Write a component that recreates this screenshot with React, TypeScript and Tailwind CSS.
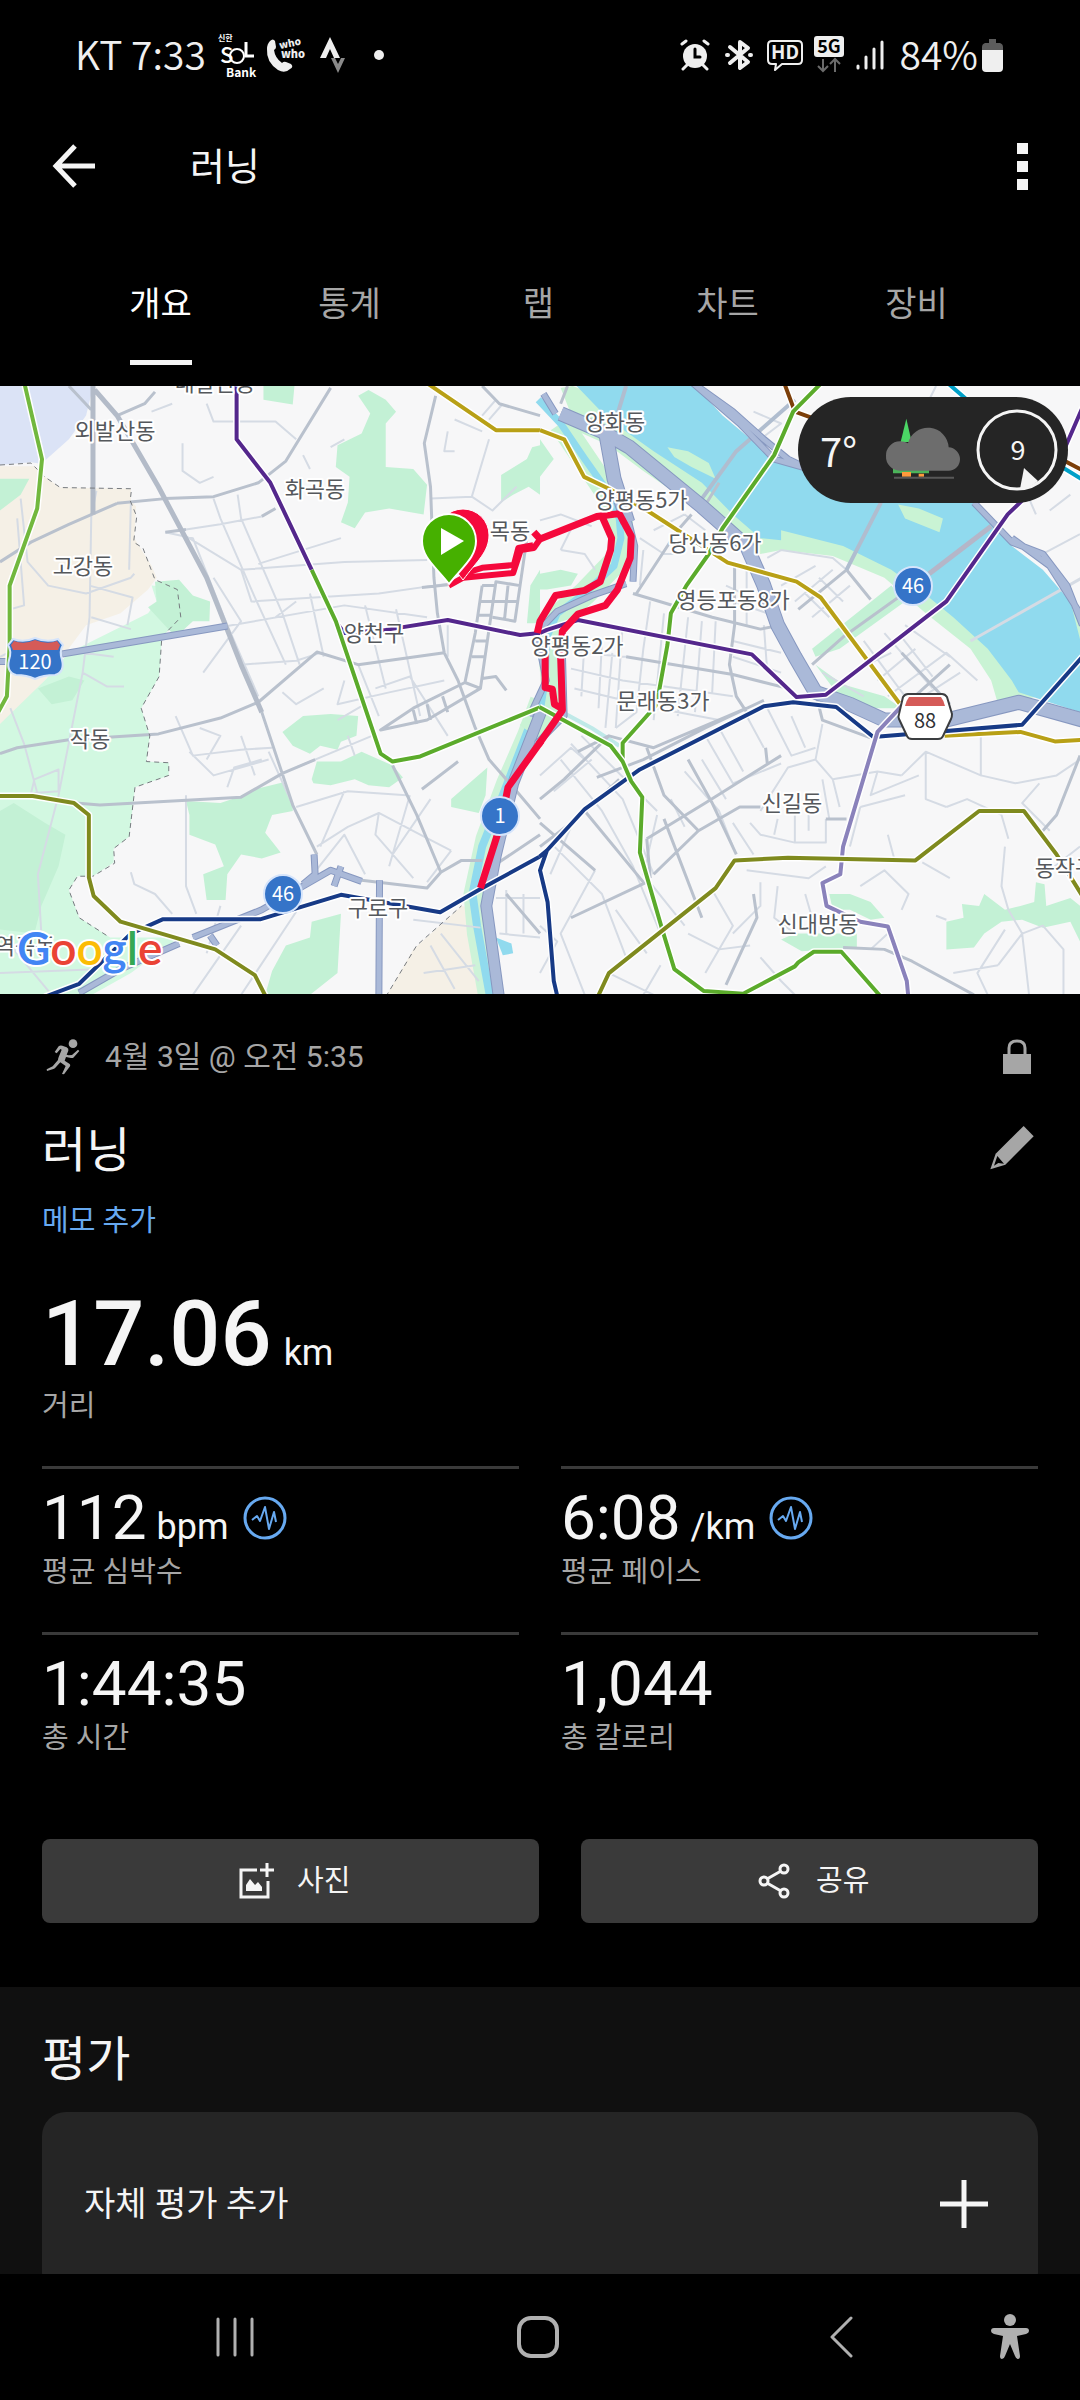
import { ReactNode } from "react";

type TLine = { color: string; d: string };
type TLabel = { text: string; x: number; y: number };
type TStat = { value: string; unit?: string; label: string; zone?: boolean };

const tabs = ["개요", "통계", "랩", "차트", "장비"];

const stats: TStat[] = [
  { value: "112", unit: "bpm", label: "평균 심박수", zone: true },
  { value: "6:08", unit: "/km", label: "평균 페이스", zone: true },
  { value: "1:44:35", label: "총 시간" },
  { value: "1,044", label: "총 칼로리" },
];

/* ---------- map data ---------- */

const westParks =
  "M0 1090L40 1070L130 1120L190 1150L170 1230L120 1330L100 1400L0 1390Z M0 250H85L60 290L0 330Z M450 510L520 505L560 545L610 560L608 610L560 610L510 650L430 575L455 560Z M110 780L200 750L245 760L210 810L150 820Z M765 15H855L850 62L765 50Z M1040 40L1070 25L1120 50L1150 80L1120 110V220L1200 225L1240 265L1230 340L1130 325L1060 335L1030 375L990 360L1010 310L1015 245L975 220L980 165L1050 135L1075 85Z M1568 165V290L1535 270L1490 290L1455 310V240L1530 200L1545 170Z M820 890L880 850L960 845L1040 850L1035 900L990 915L980 935L930 925L900 945L850 925Z M905 1010L920 965L990 965L1050 940L1140 975L1170 1005L1130 1030L1070 1025L1030 1010L960 1025L910 1020Z M540 1065L640 1070L690 1055L740 1035L820 1018L850 1080V1090L790 1100L770 1145L815 1195L760 1210L700 1200L660 1250L655 1315H600L590 1250L650 1230L625 1175L550 1150V1100Z M770 1555L790 1495L830 1430L900 1410L905 1370L990 1350L980 1500L900 1555Z M1310 1060L1415 980L1410 1050L1390 1095L1310 1080Z M1540 520L1568 480V615H1530Z";

const eastParks =
  "M790 680L1020 520L1060 560L870 680L800 700Z M0 490L60 480L110 490L90 520L20 530H0Z M0 150L40 200L0 245Z M800 720L880 770L1000 800L1050 830H960L860 790Z M840 1300L900 1300L960 1320L1000 1360L960 1365L900 1340L850 1340Z M740 1400L920 1400V1435L760 1445L700 1415Z M1180 1440V1370L1230 1360L1225 1325L1275 1330L1290 1300L1350 1340L1395 1330L1435 1320L1440 1270L1465 1275L1470 1330L1540 1310L1568 1330V1420L1540 1370L1460 1385L1400 1365L1340 1370L1290 1400L1260 1435Z";

const westMinor =
  "M540 378L640 365L760 345 M480 385L560 400L660 620L750 800 M530 390L700 480L1000 460L1240 455 M700 480L730 560L1100 540L1300 515 M660 622L1000 570L1240 600 M620 300L640 350L740 550L830 720 M690 290L700 350L820 590L870 720 M750 465L990 400 M670 640L700 720L860 710L930 690 M530 160V230L580 260L620 245 M600 60L620 105H800L860 150 M620 500L700 610L590 740 M1000 760L980 820L1130 790L1290 760 M1040 720L1100 850 M1090 780L1190 750L1300 900 M1150 580L1220 850 M780 940L850 1075 M510 850L560 950L700 935L790 930 M550 940L620 1000L780 960 M580 880L640 900L600 960 M660 1030L680 980L760 960 M700 900L740 1000 M860 980L1080 900 M540 1050V1280L570 1350 M380 1245L390 1275L450 1300L500 1350 M280 280L265 345L260 600L240 740L170 1050 M170 1050L110 1250L120 1400 M60 300L80 460L140 520L250 540L380 500L390 490 M240 740L310 775H360 M30 830L70 920L110 1050 M265 600L380 630 M260 520L385 550L370 620 M240 690L330 700 M380 310L375 480 M100 1010L170 985V1040L90 1045Z M1300 130L1290 180L1320 180 M1250 300L1370 295L1420 150 M1370 295L1430 330L1500 270 M1320 100L1400 130 M1400 90L1440 50 M1420 100L1460 60 M920 1180L1010 1130L1100 1095L1220 1150L1310 1190 M1100 1095L1090 1150L1200 1260 M900 1260L1000 1150L1060 1250 M860 1080L1010 1040L1180 1050 M1000 1040L930 1180 M1190 1050L1130 1230 M1250 1060L1140 1200 M1310 1190L1240 1270 M1200 1365L1395 1385 M1440 1310H1568 M1450 1400L1568 1410 M1470 1290V1400 M1520 1300V1400 M1250 1430L1320 1540 M1230 1500L1380 1480 M1280 1400L1390 1520 M40 1440L150 1555 M0 1500L280 1490 M640 1330L600 1450 M700 1380L620 1480L560 1555 M860 1345L700 1555 M0 700L70 670L130 740 M50 350L70 570L30 580 M800 600L860 560 M900 540L940 700 M1060 570L1120 780 M940 780L860 820L820 790 M980 860L1060 820 M1010 900L1030 950 M1300 620V700 M880 190L900 225 M1000 150L960 170 M440 80L500 60";

const westRoads =
  "M200 15L265 75 M340 90L420 60L450 30 M340 312L480 300L620 295L750 260L830 205L960 20 M0 460L90 410L200 365L340 312 M0 945L50 930L200 910L460 895L640 855L750 815L920 688L1040 720L1290 690 M220 1070L290 1075L700 1055L820 995L915 960 M1400 520L1380 640L1350 765L1200 830L1105 885L1240 860L1395 780L1425 600L1440 510L1510 520L1495 610L1430 600 M1400 520H1440 M1395 560H1500 M1390 595H1430 M1475 520L1465 605 M1380 660H1415 M1370 700H1410 M1350 765L1395 780 M1240 820L1250 860 M1200 835L1210 870 M1285 800L1300 840 M1530 400L1510 520 M1265 40L1232 160L1250 270L1260 500L1270 590L1290 690L1330 760L1380 880L1420 960L1500 1040L1568 1110 M1140 975L1210 1100L1280 1245L1240 1285L1050 1265 M1280 1245L1340 1215H1400 M1400 15L1450 60L1568 90 M480 385L540 378 M760 345L800 325 M1225 1035L1330 965 M1400 755L1440 750L1470 785 M760 840L850 1075L920 1200 M1225 525L1300 518 M1440 1225L1568 1150 M1470 1300L1568 1400";

const eastMinor =
  "M60 430L130 440L160 480 M100 360L60 430 M0 355L60 340L150 370 M290 400L360 440L410 440 M330 380L420 340 M300 430L290 520 M320 560L300 680L280 840L220 880 M360 590L330 860 M430 600L400 850 M470 610L450 840 M510 610L500 790 M90 730L240 760L560 800 M110 690L250 700 M130 650L120 800 M180 660L170 830 M210 690L190 880 M240 620L220 880 M100 780L340 830L520 860 M560 560L660 590 M540 520L640 560 M600 480V620 M560 660L700 690 M560 700L700 740 M650 620L660 740 M420 340L480 380 M660 450L700 430L850 450L890 480 M700 520L800 470 M740 560L850 480 M790 600L900 520 M840 600L770 540 M880 560L810 500 M940 720L1050 650L1140 750 M980 760L1090 680 M900 740L1020 690 M1010 800L1180 690L1270 760 M1060 830L1220 740 M1060 620L1190 700 M1000 640L1140 780 M940 660L1060 800 M820 740L940 800 M0 1000L90 930L130 960 M40 1040L150 960 M90 920L240 1060L330 1250 M60 960L180 1090L270 1230L350 1400 M120 900L340 1090 M30 1170L180 1300L250 1460 M90 1130L30 1250 M160 1240L60 1400L130 1555 M340 1100L300 1250L420 1380 M380 1060L420 1130 M420 990L520 1090L560 1180 M480 900L560 1020L700 970 M520 880L590 990 M600 850L650 930 M660 830L730 950L800 930 M730 850L770 930 M820 870L800 960L850 1010L980 990L1050 1000 M800 960L720 980L640 1090 M850 1010L870 1080 M980 990L960 1050L1100 1000 M1050 1000L1120 940L1280 1000V890 M1120 940V1060L1180 1080 M1280 1000L1380 1020L1500 1000L1568 960 M1180 1080L1240 1060L1340 1100L1360 1160 M1450 1020L1400 1070L1480 1140 M610 1120L640 1150L740 1170H830V1110 M690 1110L680 1150 M740 1090V1170 M780 1090V1140 M560 1120L620 1200 M930 1080L900 1180 M930 1080L1060 1050 M1010 1150L1030 1215 M930 1280L1000 1240L1070 1300L1050 1340 M600 1240L780 1260L830 1230 M640 1270L640 1330L560 1400 M690 1280L680 1360L740 1400 M770 1300L790 1360 M500 1290L560 1380L480 1500 M430 1400L520 1440L610 1430 M350 1480L300 1555 M200 1500L330 1555 M220 1340L310 1450 M640 1460L700 1520L740 1555 M1110 1220L1190 1260 M1350 1180L1340 1280L1360 1340L1400 1400L1330 1480 M1400 1400L1460 1380L1520 1440V1555 M1350 1390L1270 1500L1300 1555 M1330 1480L1200 1500 M1150 1355L1180 1365 M1400 1400L1420 1555 M960 1440L1010 1400 M1400 260L1440 340 M1480 330L1540 290 M1460 440L1568 390 M1150 15L1130 50 M620 80L700 110L640 150 M0 1380L50 1420L0 1500 M820 1010L840 1110 M470 960L540 1060 M1568 1180L1480 1240";

const eastRoads =
  "M0 1060L70 1010L200 900 M270 540L500 600L640 630L700 620 M250 700L560 745L720 780 M280 540L400 380L440 340 M165 1005L300 960L480 880L650 810 M110 940L200 900L330 930L600 830 M800 790L820 860L960 905 M565 470V620L550 720L570 800L600 840 M310 930L360 1050L460 1140 M330 1250L460 1140L580 1080H640 M310 1160L480 1070L700 950 M310 1160L320 1260 M360 1110L470 1360 M430 960L500 1070L570 1200 M90 1360L310 1270 M130 1090L300 1270 M0 1120L160 1240 M0 1180L120 1100L230 1010 M790 720L880 650L1040 550 M750 580L890 480L960 555 M1050 690L1190 820 M1190 720L1050 830 M1568 950L1500 1100L1450 1150 M620 1300L630 1360L540 1530 M880 1435L1000 1440L1080 1470L1260 1555 M830 1110H890 M655 930L660 970 M520 260L470 330 M60 60L80 15";

const westHighway =
  "M-10 712H40 M180 693L660 622 M230 1550L350 1490L520 1425 M560 1410L760 1340L960 1240L1050 1268 M912 1200L915 1250L880 1275 M970 1280L990 1230 M610 1405L630 1430 M1102 1265L1100 1570";

const eastHighway =
  "M440 5L560 80L650 150L720 200L780 225 M440 5L580 110L680 200L780 225 M1260 310L1370 410L1460 440L1530 520L1575 620 M1370 400L1480 470L1575 600 M10 35L45 85 M-10 640L50 585L150 545L250 515 M65 690L70 850L-10 920 M-5 660L18 760L-30 850 M255 350L275 420L270 510";

const eastWideHighway =
  "M60 85L180 130L260 170L330 220L470 320L600 420L650 520L690 620L740 700L800 790L900 820L1000 860L1070 860 M1180 860L1390 815L1575 860 M190 130L215 250L255 360";

const westTransit: TLine[] = [
  { color: "#72b83e", d: "M70 5L122 200L108 325L28 520V670L20 800L-5 840" },
  { color: "#54278c", d: "M687 5V150L785 260L905 480" },
  { color: "#54278c", d: "M965 600L1000 640L1120 632L1300 607L1510 645L1568 640" },
  { color: "#5bab2b", d: "M905 480L975 610L1105 945L1140 965L1220 952L1568 828" },
  { color: "#b8a016", d: "M1235 5L1440 127H1568" },
  { color: "#173a86", d: "M130 1560L230 1527L380 1400L472 1364H755L990 1302L1278 1346L1390 1290L1568 1205" },
  { color: "#7f8a1e", d: "M-5 1052H95L215 1070L258 1100V1258L272 1305L350 1370L625 1440L740 1505L775 1565" },
];

const eastTransit: TLine[] = [
  { color: "#7c3f0a", d: "M708 5L740 80L820 105 M1480 185L1575 228" },
  { color: "#00a0c8", d: "M1180 5L1260 65 M1500 212L1575 252" },
  { color: "#b8a016", d: "M0 127L70 150L128 245L200 275L320 335L545 462L745 510L815 550L1050 825 M1175 900L1395 890L1495 914L1575 910" },
  { color: "#5bab2b", d: "M820 5L735 80L680 190L530 375L490 440L425 520L380 590L370 670L345 790L335 825L240 918V965" },
  { color: "#54278c", d: "M0 640L20 632L110 607L615 694L745 802L830 796L955 712L1180 560L1358 340L1500 220L1575 70" },
  { color: "#173a86", d: "M-2 1206L20 1190L130 1085L290 985L650 825L735 815L860 827L968 903L1400 872L1575 700 M20 1190L0 1240L22 1320L40 1520L52 1565" },
  { color: "#8a82bb", d: "M1055 820L980 890L880 1180L872 1250L820 1272L832 1330L930 1370L1010 1382L1065 1520L1070 1565" },
  { color: "#5bab2b", d: "M-2 827L205 925L240 965L265 1015L297 1055L290 1195L355 1390L390 1490L475 1545L590 1552L740 1483L750 1473L795 1446H875L995 1565" },
  { color: "#7f8a1e", d: "M165 1565L200 1500L510 1285L565 1215L720 1208L1090 1215L1275 1090H1405L1500 1200L1575 1305" },
];

const mapLabels: TLabel[] = [
  { text: "내발산동", x: 215, y: 5 },
  { text: "외발산동", x: 115, y: 53 },
  { text: "화곡동", x: 315, y: 111 },
  { text: "고강동", x: 83, y: 188 },
  { text: "작동", x: 90, y: 361 },
  { text: "양천구", x: 374, y: 255 },
  { text: "구로구", x: 378, y: 530 },
  { text: "목동", x: 510, y: 153 },
  { text: "양화동", x: 615, y: 44 },
  { text: "양평동5가", x: 641, y: 122 },
  { text: "당산동6가", x: 715, y: 165 },
  { text: "영등포동8가", x: 733, y: 222 },
  { text: "양평동2가", x: 577, y: 268 },
  { text: "문래동3가", x: 663, y: 323 },
  { text: "신길동", x: 792, y: 425 },
  { text: "신대방동", x: 818, y: 546 },
  { text: "동작구", x: 1065, y: 490 },
  { text: "역곡동", x: 25, y: 568 },
];

const roundBadges = [
  { n: "1", x: 500, y: 430 },
  { n: "46", x: 283, y: 508 },
  { n: "46", x: 913, y: 200 },
];

/* ---------- map ---------- */

const Half = ({ east, children }: { east?: boolean; children: ReactNode }) => (
  <g transform={`translate(${east ? 540 : 0} -6) scale(0.3444 0.3954)`}>{children}</g>
);

const Stroke = ({ d, color, width, dash }: { d: string; color: string; width: number; dash?: string }) => (
  <path
    d={d}
    fill="none"
    stroke={color}
    strokeWidth={width}
    strokeDasharray={dash}
    strokeLinejoin="round"
    vectorEffect="non-scaling-stroke"
  />
);

const Cased = ({ d, width }: { d: string; width: number }) => (
  <>
    <Stroke d={d} color="#8798c0" width={width} />
    <Stroke d={d} color="#aab9d8" width={width - 2} />
  </>
);

const Transit = ({ lines }: { lines: TLine[] }) => (
  <>
    {lines.map((line) => (
      <g key={line.color + line.d}>
        <Stroke d={line.d} color="#ffffff" width={7} />
        <Stroke d={line.d} color={line.color} width={4} />
      </g>
    ))}
  </>
);

const ActivityMap = () => (
  <svg viewBox="0 0 1080 608" className="block w-full" role="img" aria-label="지도">
    <rect width="1080" height="608" fill="#f7f7f8" />
    {/* land cover and water */}
    <Half>
      <path fill="#dbe3f6" d="M0 0H275L250 90L200 150L120 212L90 208L0 215Z" />
      <path fill="#f5f0e6" d="M0 218H100L130 245L175 272L380 275V305L395 320L390 400L440 470L455 500L430 530L350 590L250 620L130 760L0 890Z M1120 1560L1200 1440L1340 1330L1395 1340L1390 1560Z" />
      <path fill="#d2f8e1" d="M0 870L130 760L200 690L430 590L455 560L440 520L510 525L525 600L470 650L462 750L410 830L435 900L425 965L490 968V1000L392 1030L375 1155L330 1185V1220L270 1255H225L200 1290L230 1360L320 1410L520 1410L380 1500L240 1568H0Z" />
      <path fill="#c3f1d5" d={westParks} />
      <Stroke d="M1568 810L1530 900L1470 1020L1410 1160L1375 1300L1385 1400L1420 1570" color="#cdf3d8" width={20} />
      <Stroke d="M1540 870L1460 1050L1400 1180L1372 1300L1385 1380L1425 1570" color="#90daee" width={8} />
      <path fill="#90daee" d="M1440 1410L1485 1425L1490 1450L1460 1455Z" />
    </Half>
    <Half east>
      <path fill="#c9f3d4" d="M60 20L110 130L200 165L300 230L450 320L540 390L640 440L700 430L850 445L1000 500L1120 590L1250 680L1310 760L1330 820L1450 800L1400 600L900 300L95 15Z" />
      <path fill="#c3f1d5" d={eastParks} />
      <path fill="#90daee" d="M95 5H440L530 90L640 170L750 225L1260 310L1370 420L1460 480L1540 560L1568 640V840L1390 790L1370 760L1300 680L1200 600L1130 550L1020 480L880 420L700 380L700 405L640 400L560 340L470 260L330 180L200 100Z" />
      <path fill="#c9f3d4" d="M370 170L430 180L490 210L510 250L440 220L390 195Z M1040 315L1100 325L1170 350L1160 385L1060 350Z M1540 560L1575 600V680Z" />
      <Stroke d="M60 110L130 200L200 290L235 360L230 450L130 540L50 600L30 680L40 800L-30 890" color="#c9f3d4" width={24} />
      <Stroke d="M-5 50L60 110L130 200L195 280L230 350L235 400L215 470L130 540L50 590L20 650L15 760L0 840" color="#90daee" width={7} />
      <Stroke d="M75 845L150 880L230 925" color="#bfe9e8" width={4} />
    </Half>
    {/* streets */}
    <Half>
      <Stroke d={westMinor} color="#d5dbe4" width={2} />
      <Stroke d={westRoads} color="#b9c1cd" width={3} />
      <Stroke d="M270 5V340 M275 25L340 90L460 270L600 500L700 720L760 840" color="#b3bbc8" width={5} />
      <Stroke d="M0 215L90 210L130 245L175 272L382 275L378 305L397 345L388 410L415 425L450 505L515 530L525 600L470 650L462 750L410 830L435 900L425 965L490 968V1000L392 1030L375 1155L330 1185L333 1222L270 1255H225L200 1290L230 1360L310 1405 M1120 1560L1210 1430L1340 1330" color="#777b80" width={1} dash="5 4" />
      <Cased d={westHighway} width={7} />
      <Cased d="M1575 830L1490 1020L1440 1200L1412 1330L1450 1570" width={12} />
    </Half>
    <Half east>
      <Stroke d={eastMinor} color="#d5dbe4" width={2} />
      <Stroke d={eastRoads} color="#b9c1cd" width={3} />
      <Stroke d="M470 300L570 180L740 50 M890 480L990 310 M250 15L220 100" color="#b0bdcf" width={4} />
      <Stroke d="M1130 490L1310 370" color="#b5b6c8" width={5} />
      <Stroke d="M1575 500L1250 660" color="#d5dbe4" width={3} />
      <Cased d={eastHighway} width={7} />
      <Cased d={eastWideHighway} width={15} />
    </Half>
    {/* subway lines */}
    <Half>
      <Transit lines={westTransit} />
    </Half>
    <Half east>
      <Transit lines={eastTransit} />
    </Half>
    {/* recorded route */}
    <Half>
      <Stroke d="M1303 520L1345 500L1490 488L1512 430L1550 425L1570 400 M1345 490L1400 475L1492 468L1505 425L1548 418" color="#f5093c" width={6} />
      <Stroke d="M1572 912L1475 1030L1455 1120L1395 1285" color="#f5093c" width={7} />
    </Half>
    <Half east>
      <Stroke d="M-18 385L0 402L165 345L230 338L265 395L262 450L225 530L190 570L110 592L65 635L60 700L65 835L-4 922" color="#f5093c" width={7} />
      <Stroke d="M180 345L208 400L205 430L175 510L130 532L45 545L0 610L-8 640 M15 690V778L36 782L42 820L62 830" color="#f5093c" width={7} />
    </Half>
    {/* place names */}
    <g
      className="font-['Noto_Sans_CJK_KR',sans-serif]"
      fontSize="22"
      fill="#55585c"
      stroke="#ffffff"
      strokeWidth="4"
      strokeLinejoin="round"
      paintOrder="stroke"
      textAnchor="middle"
    >
      {mapLabels.map((label) => (
        <text key={label.text} x={label.x} y={label.y}>
          {label.text}
        </text>
      ))}
    </g>
    {/* finish and start pins */}
    <path fill="#f5093c" stroke="#fff" d="M463 123a26 26 0 0 1 26 26c0 17-12 26-26 45c-14-19-26-28-26-45a26 26 0 0 1 26-26Z" />
    <path fill="#46b000" stroke="#fff" strokeWidth="2" d="M449 128a27 27 0 0 1 27 27c0 17-14 26-27 43c-13-17-27-26-27-43a27 27 0 0 1 27-27Z" />
    <path fill="#fff" d="M441 142V169L464 155Z" />
    {/* road shields */}
    <g className="font-['Noto_Sans_CJK_KR',sans-serif]" fontSize="20" textAnchor="middle" fill="#fff">
      {roundBadges.map((badge) => (
        <g key={badge.x}>
          <circle cx={badge.x} cy={badge.y} r="19" fill="#3574c8" stroke="#d5e4fb" strokeWidth="2" />
          <text x={badge.x} y={badge.y + 7}>
            {badge.n}
          </text>
        </g>
      ))}
      <path fill="#3574c8" stroke="#d5e4fb" strokeWidth="2" d="M13 253Q24 257 35 252Q47 257 58 253L63 259Q59 265 62 274Q65 286 55 289Q43 289 35 293Q27 289 16 289Q6 286 9 274Q12 265 8 259Z" />
      <path fill="#d55b58" d="M14 255Q24 259 35 254Q47 259 57 255L60 259L58 264H13L11 259Z" />
      <text x="35" y="283">120</text>
      <path fill="#fff" stroke="#3b3d40" strokeWidth="2" strokeLinejoin="round" d="M908 308H942Q945 308 947 311L952 328Q952 331 951 333L943 350Q942 353 938 353H912Q908 353 907 350L899 333Q898 331 899 328L903 311Q905 308 908 308Z" />
      <path fill="#d55b58" d="M909 311H941Q944 315 945 320H905Q906 315 909 311Z" />
      <text x="925" y="342" fill="#303236">88</text>
    </g>
    <text x="17" y="579" className="font-['Lato',sans-serif]" fontSize="46" fontWeight="600" stroke="#fff" strokeWidth="4" strokeLinejoin="round" paintOrder="stroke">
      <tspan fill="#4285f4">G</tspan>
      <tspan fill="#ea4335">o</tspan>
      <tspan fill="#fbbc05">o</tspan>
      <tspan fill="#4285f4">g</tspan>
      <tspan fill="#34a853">l</tspan>
      <tspan fill="#ea4335">e</tspan>
    </text>
  </svg>
);

const WeatherPill = () => (
  <div className="absolute top-[11px] right-3 flex h-[106px] w-[270px] items-center justify-between rounded-full bg-[#252525] pr-2.5 pl-[22px] text-[#f5f5f5]">
    <span className="w-[50px] font-['Noto_Sans_CJK_KR',sans-serif] text-[40px] leading-[56px]">7°</span>
    <svg viewBox="288 88 228 192" className="h-16 w-[76px]" aria-hidden="true">
      <path fill="#4bd765" d="M352 90L368 160H335Z" />
      <path fill="#4bb45a" d="M312 238H420V254H312Z" />
      <path fill="#ff9a3c" d="M339 250H366V264H339Z M389 255H405V264H389Z" />
      <path fill="#585858" d="M315 264H495V270H315Z" />
      <path fill="#6d6d6d" d="M333 246a42 42 0 0 1-42-44a42 42 0 0 1 42-44q14 0 24 6a62 62 0 0 1 122 12a36 36 0 0 1 34 35a34 34 0 0 1-34 35Z" />
    </svg>
    <svg viewBox="0 0 82 82" className="size-[82px]">
      <circle cx="41" cy="41" r="39" fill="none" stroke="#f5f5f5" strokeWidth="3" />
      <path fill="#f5f5f5" d="M48 59L62 72Q54 79 44 80Z" />
      <text x="42" y="51" fill="#f5f5f5" fontSize="27" textAnchor="middle" className="font-['Noto_Sans_CJK_KR',sans-serif]">
        9
      </text>
    </svg>
  </div>
);

/* ---------- status bar ---------- */

const StatusBar = () => (
  <div className="flex h-[110px] items-center justify-between pr-[77px] pl-[75px] font-['Noto_Sans_CJK_KR',sans-serif] text-[39px] leading-[44px] font-[350] text-[#efefef]">
    <div className="flex items-center">
      <span className="pb-1">KT 7:33</span>
      <div className="flex items-center gap-2 pl-3">
        <svg viewBox="0 0 40 50" className="h-[50px] w-10 overflow-visible" fill="#fff">
          <text x="0" y="11" fontSize="8" fontWeight="700">신한</text>
          <text x="2" y="33" fontSize="22" fontWeight="500">S</text>
          <circle cx="19" cy="26" r="7" fill="none" stroke="#fff" strokeWidth="2" />
          <path fill="none" stroke="#fff" strokeWidth="3" d="M28 12V26H36" />
          <text x="8" y="47" fontSize="12" fontWeight="700">Bank</text>
        </svg>
        <svg viewBox="0 0 44 36" className="h-9 w-11 overflow-visible" fill="#efefef">
          <path d="M4 4q3-3 5 0l1 6q0 2-2 3q1 8 8 13q2-2 4-1l5 2q3 3-1 5q-5 5-12 1q-12-8-11-21q0-5 3-8Z" />
          <text x="14" y="12" fontSize="10" fontWeight="900" transform="rotate(-12 14 12)">who</text>
          <text x="15" y="21" fontSize="11" fontWeight="900">who</text>
        </svg>
      </div>
      <svg viewBox="0 0 26 36" className="ml-2.5 h-9 w-[26px]">
        <path fill="#efefef" d="M10 0L20 21H14L10 12L6 21H0Z" />
        <path fill="#8a8a8a" d="M11 21H15L18 27L21 21H25L18 36Z" />
      </svg>
      <span className="ml-7 size-2.5 rounded-full bg-[#efefef]"></span>
    </div>
    <div className="flex items-center">
      <svg viewBox="0 0 30 32" className="mr-[15px] h-8 w-[30px]" fill="#efefef" stroke="#efefef" strokeWidth="3" strokeLinecap="round">
        <circle cx="15" cy="17" r="12" stroke="none" />
        <path d="M2 5L6 2 M28 5L24 2 M3 30L7 26 M27 30L23 26" />
        <path fill="none" stroke="#000" d="M15 10V18H20" />
      </svg>
      <svg viewBox="0 0 28 32" className="mr-3.5 h-8 w-7" fill="none" stroke="#efefef" strokeWidth="4" strokeLinejoin="round" strokeLinecap="round">
        <path d="M5 8L23 23L15 29V3L23 9L5 24" />
        <path d="M2 16H3 M25 16H26" />
      </svg>
      <svg viewBox="0 0 36 32" className="mr-[11px] h-8 w-9" fill="#efefef">
        <path fill="none" stroke="#efefef" strokeWidth="2" strokeLinejoin="round" d="M5 2H31Q35 2 35 6V21Q35 25 31 25H15L8 31L9 25H5Q1 25 1 21V6Q1 2 5 2Z" />
        <text x="18" y="20" fontSize="19" fontWeight="700" textAnchor="middle">HD</text>
      </svg>
      <svg viewBox="0 0 30 40" className="mr-3 h-10 w-[30px]">
        <rect y="1" width="30" height="21" rx="3" fill="#efefef" />
        <text x="15" y="18" fontSize="18" fontWeight="700" fill="#000" textAnchor="middle">5G</text>
        <path fill="none" stroke="#6b6b6b" strokeWidth="2" d="M9 24V36 M4 31L9 36L14 31 M21 37V25 M16 29L21 24L26 29" />
      </svg>
      <svg viewBox="0 0 29 32" className="mr-[15px] h-8 w-[29px]" stroke="#efefef" strokeWidth="3" strokeLinecap="round">
        <path d="M2 27V29 M10 18V29 M18 10V29 M26 3V29" />
      </svg>
      <span className="pb-1">84%</span>
      <svg viewBox="0 0 21 34" className="ml-1 h-[34px] w-[21px]">
        <path fill="#5c5c5c" d="M7 1H14V5H18Q21 6 21 9V14H0V9Q0 6 3 5H7Z" />
        <path fill="#efefef" d="M0 12H21V30Q21 34 17 34H4Q0 34 0 30Z" />
      </svg>
    </div>
  </div>
);

/* ---------- activity details ---------- */

const ZoneIcon = () => (
  <svg viewBox="0 0 44 44" className="ml-1 size-11 self-center" fill="none" stroke="#67a9f0" strokeLinejoin="round" aria-hidden="true">
    <circle cx="22" cy="22" r="20" strokeWidth="3" />
    <path strokeWidth="2" d="M9 24L14 20L17 25L22 11L26 33L31 16L33 26" />
  </svg>
);

const Stat = ({ stat }: { stat: TStat }) => (
  <div className="border-t-3 border-[#3a3a3a] pt-[17px]">
    <div className="flex h-16 items-baseline gap-2.5">
      <span className="text-[62px] leading-[64px]">{stat.value}</span>
      {stat.unit && <span className="text-4xl leading-[40px]">{stat.unit}</span>}
      {stat.zone && <ZoneIcon />}
    </div>
    <p className="mt-0.5 text-[29px] leading-[40px] text-[#a6a6a6]">{stat.label}</p>
  </div>
);

const App = () => {
  return (
    <div className="flex h-screen flex-col overflow-hidden bg-black font-['Roboto','Noto_Sans_CJK_KR',sans-serif] text-[#f5f5f5]">
      <StatusBar />
      {/* app bar */}
      <header className="flex h-28 items-center px-[52px]">
        <button aria-label="뒤로" className="h-11 w-11">
          <svg viewBox="0 0 44 44" fill="none" stroke="#f5f5f5" strokeWidth="5">
            <path d="M43 22H5 M23 2L4 22L23 42" />
          </svg>
        </button>
        <h1 className="ml-[94px] pt-0.5 text-[38px] leading-[48px]">러닝</h1>
        <button aria-label="더보기" className="ml-auto flex flex-col gap-[7px]">
          <span className="size-[11px] bg-[#f5f5f5]"></span>
          <span className="size-[11px] bg-[#f5f5f5]"></span>
          <span className="size-[11px] bg-[#f5f5f5]"></span>
        </button>
      </header>
      {/* tabs */}
      <nav className="flex h-[164px] shrink-0 pt-[58px] pr-[69px] pl-[66px]">
        {tabs.map((tab, i) => (
          <button key={tab} className="flex flex-1 flex-col items-center">
            <span className={i === 0 ? "text-[34px] leading-[48px] text-white" : "text-[34px] leading-[48px] text-[#a6a6a6]"}>
              {tab}
            </span>
            {i === 0 && <span className="mt-8 h-[5px] w-[62px] bg-[#f5f5f5]"></span>}
          </button>
        ))}
      </nav>

      <main className="min-h-0 flex-1 overflow-hidden">
        <div className="relative">
          <ActivityMap />
          <WeatherPill />
        </div>

        <section className="px-[42px] pt-[45px] pb-16">
          <div className="flex h-9 items-center text-[#a6a6a6]">
            <svg viewBox="50 26 102 108" className="ml-1 h-9 w-[34px]" fill="#a6a6a6" aria-hidden="true">
              <circle cx="131" cy="40" r="13" />
              <path d="M76 65L88 48Q92 44 99 46L112 51Q119 55 117 61L112 73L118 75L128 74L146 58L150 62L132 82Q129 84 125 83L110 80L106 91L121 101Q124 104 122 108L104 132L98 131L109 107L93 96L78 112Q76 115 72 116L53 122L52 117L70 108L86 89Q86 84 89 78L97 58L93 56L82 69Z" />
            </svg>
            <p className="ml-[25px] text-[30px] leading-[36px]">4월 3일 @ 오전 5:35</p>
            <svg viewBox="0 0 28 36" className="mr-[7px] ml-auto h-9 w-7" aria-hidden="true">
              <path fill="#a6a6a6" d="M0 15H28V35H0Z" />
              <path fill="none" stroke="#a6a6a6" strokeWidth="3" d="M6 16V9Q6 2 14 2Q22 2 22 9V16" />
            </svg>
          </div>
          <div className="mt-11 flex h-16 items-center justify-between">
            <h2 className="text-5xl leading-[64px]">러닝</h2>
            <button aria-label="이름 편집" className="mr-1 mb-1.5">
              <svg viewBox="59 314 132 132" className="size-11" fill="#a6a6a6">
                <path d="M160 314L190 345L105 430L60 444L76 397Z" />
                <path fill="#000" d="M81 404L71 433L84 425L101 427Z" />
              </svg>
            </button>
          </div>
          <a href="#memo" className="mt-[18px] block w-fit text-[29px] leading-[40px] text-[#67a9f0]">
            메모 추가
          </a>

          <div className="mt-[50px] flex h-[88px] items-baseline gap-3">
            <span className="text-[90px] leading-[88px] font-medium">17.06</span>
            <span className="text-4xl leading-[40px]">km</span>
          </div>
          <p className="mt-[7px] text-[29px] leading-[40px] text-[#a6a6a6]">거리</p>

          <div className="mt-10 grid grid-cols-2 gap-x-[42px] gap-y-10">
            {stats.map((stat) => (
              <Stat key={stat.label} stat={stat} />
            ))}
          </div>

          <div className="mt-[81px] flex gap-[42px] text-[29px] leading-[40px]">
            <button className="flex h-[84px] flex-[12] items-center justify-center gap-[22px] rounded-lg bg-[#3a3a3a] pl-2">
              <svg viewBox="0 0 36 36" className="size-9" fill="none" stroke="#f5f5f5" strokeWidth="3" aria-hidden="true">
                <path d="M18 7H2V34H29V18 M28 0V14 M21 7H35" />
                <path fill="#f5f5f5" stroke="none" d="M7 28V22L11 16L16 22L19 19L23 24V28Z" />
              </svg>
              사진
            </button>
            <button className="flex h-[84px] flex-[11] items-center justify-center gap-[26px] rounded-lg bg-[#3a3a3a] pl-2">
              <svg viewBox="0 0 32 36" className="h-9 w-8" fill="none" stroke="#f5f5f5" strokeWidth="3" aria-hidden="true">
                <path d="M9 16L23 8 M9 20L23 28" />
                <circle cx="6" cy="18" r="4" />
                <circle cx="26" cy="6" r="4" />
                <circle cx="26" cy="30" r="4" />
              </svg>
              공유
            </button>
          </div>
        </section>

        {/* self evaluation */}
        <section className="bg-[#101010] px-[42px] pt-[43px]">
          <h2 className="text-5xl leading-[60px]">평가</h2>
          <button className="mt-[22px] flex h-[184px] w-full items-center justify-between rounded-3xl bg-[#252525] pr-[50px] pl-[42px]">
            <span className="text-[34px] leading-[48px]">자체 평가 추가</span>
            <svg viewBox="0 0 48 48" className="size-12" stroke="#f5f5f5" strokeWidth="5" aria-hidden="true">
              <path d="M24 0V48 M0 24H48" />
            </svg>
          </button>
        </section>
      </main>

      {/* system navigation */}
      <footer className="flex h-[126px] shrink-0 items-center bg-black pr-[51px] pl-[216px]">
        <div className="flex flex-1 items-center justify-between">
          <button aria-label="최근 앱">
            <svg viewBox="0 0 38 42" className="h-[42px] w-[38px]" stroke="#b0b0b0" strokeWidth="3" strokeLinecap="round">
              <path d="M2 3V39 M19 3V39 M36 3V39" />
            </svg>
          </button>
          <button aria-label="홈">
            <svg viewBox="0 0 42 42" className="size-[42px]" fill="none" stroke="#b0b0b0" strokeWidth="4">
              <rect x="2" y="2" width="38" height="38" rx="12" />
            </svg>
          </button>
          <button aria-label="뒤로 가기">
            <svg viewBox="0 0 38 42" className="h-[42px] w-[38px]" fill="none" stroke="#b0b0b0" strokeWidth="3" strokeLinecap="round" strokeLinejoin="round">
              <path d="M29 2L10 21L29 40" />
            </svg>
          </button>
        </div>
        <button aria-label="접근성" className="ml-[131px]">
          <svg viewBox="0 0 38 46" className="h-[46px] w-[38px]" fill="#b0b0b0">
            <circle cx="19" cy="6" r="6" />
            <path d="M3 14H35Q38 14 38 17Q38 19 35 20L26 22L29 42Q29 45 27 45Q25 45 24 42L19 30L14 42Q13 45 11 45Q9 45 9 42L12 22L3 20Q0 19 0 17Q0 14 3 14Z" />
          </svg>
        </button>
      </footer>
    </div>
  );
};

export default App;
